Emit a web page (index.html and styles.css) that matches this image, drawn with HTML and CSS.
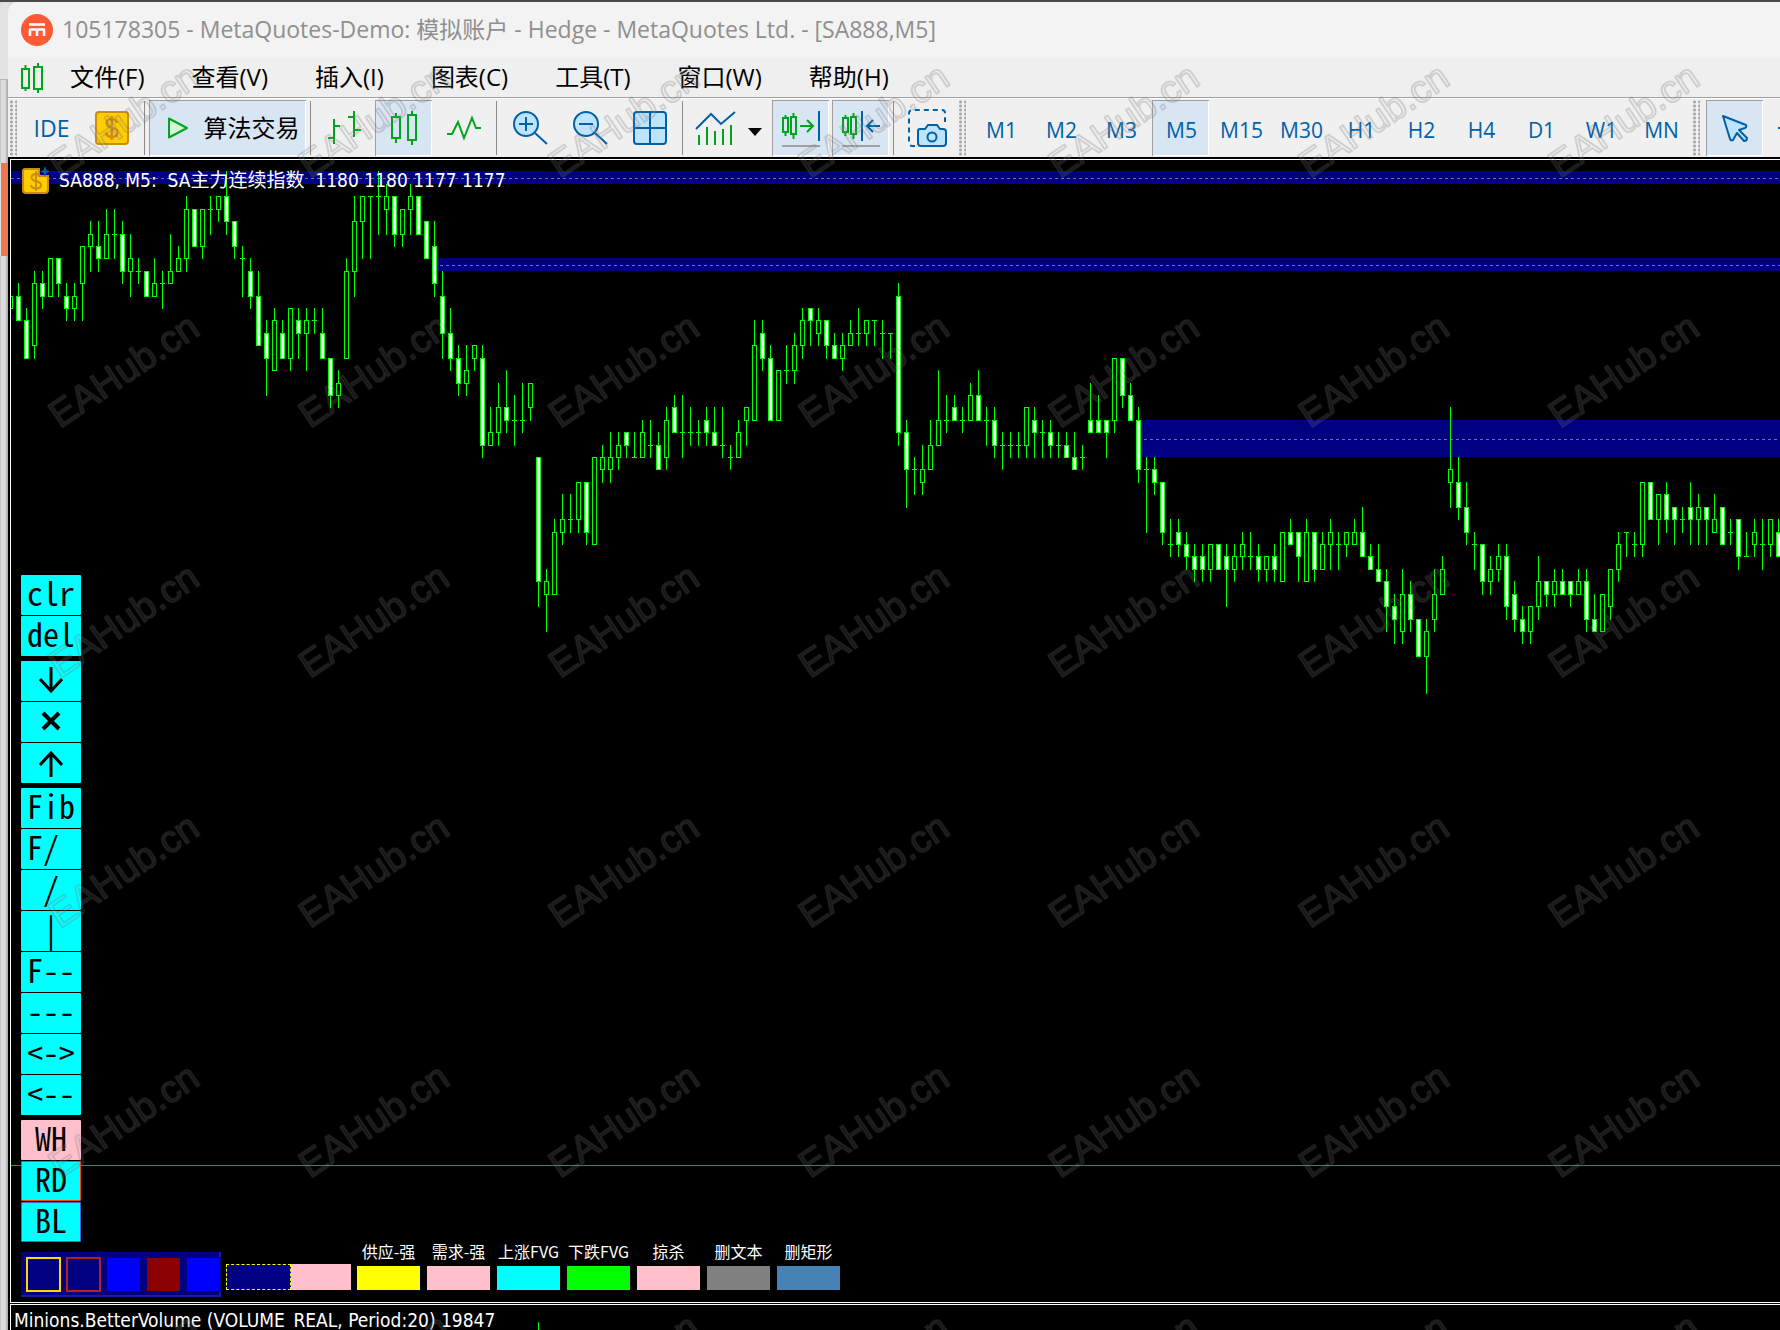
FILE: index.html
```html
<!DOCTYPE html>
<html lang="zh-CN">
<head>
<meta charset="utf-8">
<title>MetaTrader 5 - SA888,M5</title>
<link rel="stylesheet" href="styles.css">
</head>
<body>
<div class="desktop">
  <div class="backdrop" aria-hidden="true"></div>
  <div class="window">
    <header class="titlebar">
      <svg class="logo" viewBox="0 0 32 32" width="32" height="32" aria-hidden="true">
        <circle cx="16" cy="16" r="16" fill="#ff5a34"/>
        <path d="M8 10.500h16M9 22v-6.500h14V22M16 15.500V22" fill="none" stroke="#fff" stroke-width="2.600" stroke-linejoin="round"/>
      </svg>
      <h1 class="caption">105178305 - MetaQuotes-Demo: 模拟账户 - Hedge - MetaQuotes Ltd. - [SA888,M5]</h1>
    </header>

    <nav class="menubar">
      <svg viewBox="0 0 24 32" width="24" height="32" aria-hidden="true" fill="none" stroke="#00a41e" stroke-width="2">
        <path d="M1 7h7v19H1zM4.500 3v4M4.500 26v3M13 5h8v22h-8zM17 1v4M17 27v4"/>
      </svg>
      <button class="menu" type="button">文件(F)</button>
      <button class="menu" type="button">查看(V)</button>
      <button class="menu" type="button">插入(I)</button>
      <button class="menu" type="button">图表(C)</button>
      <button class="menu" type="button">工具(T)</button>
      <button class="menu" type="button">窗口(W)</button>
      <button class="menu" type="button">帮助(H)</button>
    </nav>

    <div class="toolbar" role="toolbar" aria-label="工具栏">
      <span class="grip"></span>
      <button class="tool ide" type="button">IDE</button>
      <button class="tool" type="button" aria-label="市场">
        <svg viewBox="0 0 41 40" width="41" height="40">
          <rect x="5" y="4" width="32" height="32" rx="3" fill="#ffcc00" stroke="#c98d10" stroke-width="2"/>
          <path d="M26 15c-1-3-3-4-5.500-4-3 0-5 1.500-5 4.200 0 6 11 3 11 9.300 0 3-2.500 4.500-5.500 4.500s-5.500-1.500-6-4.500M20.800 8v24" fill="none" stroke="#c98d10" stroke-width="2.400"/>
        </svg>
      </button>
      <span class="sep"></span>
      <button class="tool algo active" type="button">
        <svg viewBox="0 0 22 24" width="22" height="24"><path d="M2 2.500v19L20 12z" fill="#d5f7d5" stroke="#00a41e" stroke-width="2" stroke-linejoin="round"/></svg>
        <span>算法交易</span>
      </button>
      <span class="sep"></span>
      <button class="tool" type="button" aria-label="柱形图">
        <svg class="green" viewBox="0 0 41 40" width="41" height="40"><path d="M11 11v25M11 18h6M5 30h6M31 3v26M25 9h6M31 22h7"/></svg>
      </button>
      <button class="tool active" type="button" aria-label="烛形图">
        <svg class="green" viewBox="0 0 41 40" width="41" height="40"><path d="M9 9h8v21H9zM13 5v4M13 30v5M25 7h8v25h-8zM29 3v4M29 32v5"/></svg>
      </button>
      <button class="tool" type="button" aria-label="折线图">
        <svg class="green" viewBox="0 0 41 40" width="41" height="40"><path d="M4 26h5l6-12 6 16 8-20 4 10h5"/></svg>
      </button>
      <span class="sep"></span>
      <button class="tool" type="button" aria-label="放大">
        <svg class="blue" viewBox="0 0 41 40" width="41" height="40"><circle cx="17" cy="16" r="12"/><path d="M26 25l12 11M10 16h14M17 9v14"/></svg>
      </button>
      <button class="tool" type="button" aria-label="缩小">
        <svg class="blue" viewBox="0 0 41 40" width="41" height="40"><circle cx="17" cy="16" r="12"/><path d="M26 25l12 11M10 16h14"/></svg>
      </button>
      <button class="tool" type="button" aria-label="平铺窗口">
        <svg class="blue" viewBox="0 0 41 40" width="41" height="40"><rect x="5" y="4" width="32" height="32" rx="3"/><path d="M21 4v32M5 20h32"/></svg>
      </button>
      <span class="sep"></span>
      <button class="tool wide" type="button" aria-label="指标">
        <svg viewBox="0 0 41 40" width="41" height="40" fill="none" stroke-width="2"><path d="M1 21L16 6l10 10L40 4" stroke="#0060a8"/><path d="M4 27v10M12 19v18M20 23v14M28 21v16M36 17v20" stroke="#00a41e"/></svg>
        <svg viewBox="0 0 14 8" width="14" height="8"><path d="M0 0h14L7 8z" fill="#000"/></svg>
      </button>
      <button class="tool active" type="button" aria-label="图表移位">
        <svg viewBox="0 0 41 40" width="41" height="40" fill="none" stroke-width="2"><path d="M3 10h5v14H3zM5.500 7v3M5.500 24v4M11 9h5v17h-5zM13.500 5v4M13.500 26v5M20 18h13M27 12l6 6-6 6" stroke="#00a41e"/><path d="M39 3v30" stroke="#0060a8"/><path d="M2 38h38" stroke="#a0a0a0"/></svg>
      </button>
      <button class="tool active" type="button" aria-label="自动滚动">
        <svg viewBox="0 0 41 40" width="41" height="40" fill="none" stroke-width="2"><path d="M3 10h5v14H3zM5.500 7v3M5.500 24v4M11 9h5v17h-5zM13.500 5v4M13.500 26v5" stroke="#00a41e"/><path d="M22 3v30M40 18H27M33 12l-6 6 6 6" stroke="#0060a8"/><path d="M2 38h38" stroke="#a0a0a0"/></svg>
      </button>
      <span class="sep"></span>
      <button class="tool" type="button" aria-label="截图">
        <svg class="blue" viewBox="0 0 41 40" width="41" height="40"><path d="M9 38H6a3 3 0 0 1-3-3V5a3 3 0 0 1 3-3h30a3 3 0 0 1 3 3v9" fill="none" stroke-dasharray="5 4"/><path d="M14 21h5l3-4h9l3 4h3a3 3 0 0 1 3 3v11a3 3 0 0 1-3 3H15a3 3 0 0 1-3-3V23a2 2 0 0 1 2-2z"/><circle cx="26" cy="29" r="4.500"/></svg>
      </button>
      <span class="grip"></span>
      <button class="tool frame" type="button">M1</button>
      <button class="tool frame" type="button">M2</button>
      <button class="tool frame" type="button">M3</button>
      <button class="tool frame active" type="button">M5</button>
      <button class="tool frame" type="button">M15</button>
      <button class="tool frame" type="button">M30</button>
      <button class="tool frame" type="button">H1</button>
      <button class="tool frame" type="button">H2</button>
      <button class="tool frame" type="button">H4</button>
      <button class="tool frame" type="button">D1</button>
      <button class="tool frame" type="button">W1</button>
      <button class="tool frame" type="button">MN</button>
      <span class="grip"></span>
      <button class="tool active" type="button" aria-label="光标">
        <svg class="blue" viewBox="0 0 41 40" width="41" height="40"><path d="M9 8l23 9q1 2-1 3l-6 2 8 8q0 3-3 3l-7-8-4 7q-2 1-3-1z" stroke-linejoin="round"/></svg>
      </button>
      <button class="tool" type="button" aria-label="十字准线">
        <svg class="blue" viewBox="0 0 41 40" width="41" height="40"><path d="M4 20h33M20 4v32"/></svg>
      </button>
    </div>

    <main class="charts">
      <section class="pane price" aria-label="SA888 M5">
        <svg class="plot" id="plot" aria-hidden="true">
          <g class="zone">
            <rect x="0" y="11" width="100%" height="13"/>
            <rect x="426" y="98" width="100%" height="13"/>
            <rect x="1130" y="260" width="100%" height="37"/>
          </g>
          <g class="zone-mid">
            <line x1="0" y1="18.500" x2="100%" y2="18.500"/>
            <line x1="429" y1="105.500" x2="100%" y2="105.500"/>
            <line x1="1133" y1="279.500" x2="100%" y2="279.500"/>
          </g>
          <line class="level" x1="0" y1="1005.500" x2="100%" y2="1005.500"/>
          <path class="wicks" id="wicks"/>
          <path class="down" id="down"/>
        </svg>

        <div class="chart-head">
          <svg viewBox="0 0 28 28" width="28" height="28" aria-hidden="true">
            <path d="M3 3h14v7h9v14q0 3-3 3H4q-3 0-3-3V5q0-2 2-2z" fill="#ffcc00" stroke="#c98d10" stroke-width="2"/>
            <path d="M19 11c-1-2-3-3-5-3-2.500 0-4.500 1-4.500 3.500 0 5 9.500 2.500 9.500 7.500 0 2.500-2 3.500-4.800 3.500-2.700 0-4.700-1-5.200-3.500M14 5v20" fill="none" stroke="#c98d10" stroke-width="2"/>
            <path d="M23 0l1.500 4 3.500 1.500-3.500 1.500-1.500 4-1.500-4L18 5.500 21.500 4z" fill="#0060a8"/>
          </svg>
          <span class="symbol">SA888, M5:&nbsp; SA主力连续指数&nbsp; 1180 1180 1177 1177</span>
        </div>

        <div class="keys">
          <div class="key-group">
            <button class="key" type="button">clr</button>
            <button class="key" type="button">del</button>
          </div>
          <div class="key-group">
            <button class="key icon" type="button" aria-label="向下箭头"><svg viewBox="0 0 24 28" width="24" height="28"><path d="M12 0v24M1 12l11 12 11-12"/></svg></button>
            <button class="key icon" type="button" aria-label="叉"><svg class="bold" viewBox="0 0 24 28" width="24" height="28"><path d="M4 5l16 16M20 5L4 21"/></svg></button>
            <button class="key icon" type="button" aria-label="向上箭头"><svg viewBox="0 0 24 28" width="24" height="28"><path d="M12 28V4M1 16L12 4l11 12"/></svg></button>
          </div>
          <div class="key-group">
            <button class="key" type="button">Fib</button>
            <button class="key" type="button">F/ </button>
            <button class="key" type="button"> / </button>
            <button class="key" type="button"> | </button>
            <button class="key" type="button">F--</button>
            <button class="key" type="button">---</button>
            <button class="key" type="button">&lt;-&gt;</button>
            <button class="key" type="button">&lt;--</button>
          </div>
          <div class="key-group">
            <button class="key white" type="button">WH</button>
            <button class="key red" type="button">RD</button>
            <button class="key royal" type="button">BL</button>
          </div>
        </div>

        <div class="palette">
          <div class="swatches">
            <button class="swatch gold" type="button" aria-label="金色框"></button>
            <button class="swatch brick" type="button" aria-label="砖红框"></button>
            <button class="swatch solid-blue" type="button" aria-label="蓝色"></button>
            <button class="swatch solid-red" type="button" aria-label="深红"></button>
            <button class="swatch solid-blue" type="button" aria-label="蓝色"></button>
          </div>
          <div class="samples">
            <button class="sample dashed" type="button" aria-label="虚线框"></button>
            <button class="sample plain" type="button" aria-label="粉色"></button>
          </div>
          <div class="marks">
            <button class="mark" type="button"><span>供应-强</span><i class="chip yellow"></i></button>
            <button class="mark" type="button"><span>需求-强</span><i class="chip pink"></i></button>
            <button class="mark" type="button"><span>上涨FVG</span><i class="chip aqua"></i></button>
            <button class="mark" type="button"><span>下跌FVG</span><i class="chip lime"></i></button>
            <button class="mark" type="button"><span>掠杀</span><i class="chip pink"></i></button>
            <button class="mark" type="button"><span>删文本</span><i class="chip gray"></i></button>
            <button class="mark" type="button"><span>删矩形</span><i class="chip steel"></i></button>
          </div>
        </div>
      </section>

      <section class="pane volume" aria-label="BetterVolume">
        <svg class="plot" aria-hidden="true"><rect x="527" y="17" width="1" height="20" fill="#00ff00"/></svg>
        <span class="indicator">Minions.BetterVolume (VOLUME_REAL, Period:20) 19847</span>
      </section>
    </main>
  </div>
</div>

<svg class="watermark" aria-hidden="true">
  <defs>
    <pattern id="mark" width="250" height="250" patternUnits="userSpaceOnUse">
      <text class="mark-text" transform="translate(60 179) rotate(-34)">EAHub.cn</text>
    </pattern>
  </defs>
  <rect width="100%" height="100%" fill="url(#mark)"/>
</svg>
<script src="chart.js"></script>
</body>
</html>
```
FILE: styles.css
```css
* { box-sizing: border-box; }

body {
  margin: 0;
  font-family: "Open Sans", "Noto Sans CJK SC", sans-serif;
  background: #4a4a4a;
  overflow: hidden;
}

button {
  margin: 0;
  padding: 0;
  border: 0;
  background: none;
  font: inherit;
  color: inherit;
}

svg { display: block; flex: none; }

.desktop {
  display: flex;
  min-height: 100vh;
  padding-top: 2px;
  background: linear-gradient(#4a4a4a 2px, #dcdcdc 2px);
}

.backdrop {
  flex: none;
  width: 8px;
  border-radius: 6px 0 0 0;
  background:
    linear-gradient(90deg, #e0e0e0 1px, #ea7850 1px) 0 161px / 8px 93px no-repeat,
    linear-gradient(#e3e3e3 77px, #b8b8b8 77px 78px, transparent 78px) 0 0 / 8px 161px no-repeat,
    linear-gradient(90deg, #c4c4c4 1px, #dcdcdc 1px 5px, #b4b4b4 7px, #a4a4a4);
}

.window {
  flex: 1;
  min-width: 0;
  display: flex;
  flex-direction: column;
  border-radius: 10px 0 0 0;
  background: #f0f0f0;
  overflow: hidden;
}

.titlebar {
  display: flex;
  align-items: center;
  gap: 9px;
  height: 56px;
  padding: 0 13px;
  background: #f3f3f3;
}

.caption {
  margin: 0 0 2px;
  font-size: 23px;
  line-height: 32px;
  font-weight: 400;
  color: #8f8f8f;
  white-space: nowrap;
}

.menubar {
  display: flex;
  align-items: center;
  gap: 47px;
  height: 40px;
  padding: 0 13px;
  border-bottom: 1px solid #a0a0a0;
  background: #efefef;
}

.menubar svg { margin-right: -22px; }

.menu {
  padding-bottom: 2px;
  font-size: 24px;
  line-height: 32px;
  color: #000;
  white-space: nowrap;
}

.toolbar {
  display: flex;
  align-items: center;
  gap: 3px;
  height: 59px;
  padding: 0 0 0 1px;
  border-top: 1px solid #fff;
  background: #f0f0f0;
  overflow: hidden;
}

.grip {
  flex: none;
  width: 11px;
  height: 56px;
  background:
    radial-gradient(circle, #a8a8a8 1px, transparent 2px) 0 0 / 5px 4px;
  background-clip: content-box;
  padding: 0 3px 0 1px;
}

.sep {
  flex: none;
  width: 3px;
  height: 54px;
  border-left: 1px solid #f0f0f0;
  border-right: 1px solid #f0f0f0;
  background: #8a8a8a;
}

.tool {
  flex: none;
  display: flex;
  align-items: center;
  justify-content: center;
  width: 57px;
  height: 56px;
  font-size: 21px;
  line-height: 28px;
  color: #0060a8;
}

.tool.active {
  background: #d8e5f2;
  box-shadow: inset 1px 1px #a0a0a0, inset -1px -1px #fff;
}

.tool.frame { padding: 4px 0 0 2px; }
.tool.ide { font-size: 23px; }
.tool.wide { width: 82px; gap: 12px; }
.tool.wide svg + svg { margin-top: 8px; }

.tool.algo {
  width: 157px;
  padding: 0 0 0 11px;
  gap: 15px;
  font-size: 24px;
  color: #000;
}

.green { fill: none; stroke: #00a41e; stroke-width: 2; }
.blue { fill: #bde3ff; stroke: #0060a8; stroke-width: 2; }

.charts {
  flex: 1;
  display: flex;
  flex-direction: column;
  gap: 1px;
  padding: 2px 0 0 2px;
  background: #000;
}

.pane {
  position: relative;
  border-left: 1px solid #fff;
  border-top: 1px solid #fff;
  background: #000;
  color: #fff;
  font-family: "DejaVu Sans Condensed", "Noto Sans", "Noto Sans CJK SC", sans-serif;
}

.price {
  flex: 1;
  display: flex;
  flex-direction: column;
  border-bottom: 1px solid #fff;
}

.volume { height: 26px; overflow: hidden; }

.plot {
  position: absolute;
  left: 0;
  top: 0;
  width: 100%;
  height: 100%;
  shape-rendering: crispEdges;
}

.zone { fill: #000080; }
.zone-mid { stroke: #77776a; stroke-width: 1; stroke-dasharray: 3 3; }
.level { stroke: #00b400; stroke-width: 1; }
.wicks { fill: #00ff00; }
.down { fill: #fff; }

.chart-head,
.keys,
.palette,
.indicator { position: relative; }

.chart-head {
  display: flex;
  align-items: center;
  gap: 9px;
  padding: 6px 11px;
}

.symbol,
.indicator {
  font-size: 19px;
  line-height: 24px;
  white-space: nowrap;
}

.indicator {
  display: block;
  padding: 3px 0 0 3px;
}

.keys {
  display: flex;
  flex-direction: column;
  gap: 5px;
  width: 60px;
  margin: auto 0 10px 10px;
}

.key-group {
  display: flex;
  flex-direction: column;
  gap: 1px;
}

.key {
  display: flex;
  align-items: center;
  justify-content: center;
  height: 40px;
  padding-bottom: 6px;
  border-radius: 1px;
  background: #00ffff;
  color: #000;
  font-family: "Noto Sans Mono CJK SC", "Liberation Mono", monospace;
  font-size: 32px;
  line-height: 34px;
  white-space: pre;
}

.key.icon { padding: 0; }
.key svg { fill: none; stroke: #000; stroke-width: 3; }
.key svg.bold { stroke-width: 4; }
.key.white { background: #ffc0cb; }
.key.red { border: 1px solid #ff4500; }
.key.royal { border: 1px solid #4169e1; }

.palette {
  display: flex;
  align-items: flex-end;
  height: 45px;
  margin: 0 0 5px 10px;
}

.swatches {
  display: flex;
  align-items: center;
  gap: 5px;
  width: 200px;
  height: 45px;
  padding: 5px 0 5px 5px;
  background: #000080;
  box-shadow: inset -2px -2px #1c1c9c;
}

.swatch { flex: none; width: 35px; height: 35px; }
.swatch.gold { border: 2px solid #ffd700; }
.swatch.brick { border: 2px solid #b22222; }
.swatch.solid-blue { background: #0000ff; border: 1px solid #000080; }
.swatch.solid-red { background: #8b0000; border: 1px solid #000080; }

.samples { display: flex; padding: 0 6px 7px 5px; }
.sample { width: 60px; height: 26px; }
.sample.dashed { width: 65px; background: #000080; border: 1px dashed #ffff00; }
.sample.plain { background: #ffc0cb; }

.marks { display: flex; gap: 7px; padding-bottom: 7px; }

.mark {
  display: flex;
  flex-direction: column;
  align-items: center;
  gap: 3px;
  width: 63px;
  font-family: "Noto Sans CJK SC", sans-serif;
  font-size: 16px;
  line-height: 24px;
  white-space: nowrap;
}

.chip { width: 63px; height: 24px; }
.chip.yellow { background: #ffff00; }
.chip.pink { background: #ffc0cb; }
.chip.aqua { background: #00ffff; }
.chip.lime { background: #00ff00; }
.chip.gray { background: #808080; }
.chip.steel { background: #4682b4; }

.watermark {
  position: fixed;
  left: 0;
  top: 0;
  width: 100%;
  height: 100%;
  pointer-events: none;
}

.mark-text {
  font-family: "Liberation Sans", Arial, sans-serif;
  font-size: 38px;
  fill: rgba(255, 255, 255, 0.08);
  stroke: rgba(90, 90, 90, 0.22);
  stroke-width: 2px;
  stroke-linejoin: round;
}
```
FILE: chart.js
```js
// One entry per bar: high, body top, body bottom, low, counted in price steps
// below the top of the scale. A trailing "w" marks a bar that closed lower.
const bars = `
10,10,11,11 9,10,12,12w 11,12,15,15w 8,9,14,15 8,9,10,11w 7,7,10,10 7,7,9,10w 9,10,11,12w 9,10,11,12 6,6,9,12
4,5,6,8 4,6,7,8w 3,5,7,7 3,5,5,7 4,5,8,9w 5,7,8,10 7,8,8,9 8,8,10,10w 7,9,10,10 8,9,9,11
5,8,9,9 6,7,8,8 2,3,7,8 3,3,6,6w 3,3,6,7 2,3,3,5 2,2,3,4 0,2,4,5w 4,4,6,7w 6,7,7,10
7,8,10,11w 8,10,14,14w 12,13,15,18w 11,12,16,16 12,13,15,15w 11,11,15,16 11,12,13,15w 11,12,13,16 11,12,12,13 11,13,15,15w
15,15,18,19w 16,17,18,19 7,8,15,15 2,4,8,10 2,2,4,7 2,2,2,7 0,2,2,5 1,2,3,5 2,2,5,6w 3,3,5,6
1,2,3,5 2,2,5,5w 4,4,7,7w 4,6,9,10w 8,10,13,15w 11,13,15,16w 14,15,17,18w 14,16,17,18 14,14,15,16 14,15,22,23w
19,21,22,22 17,19,21,22 16,19,20,21w 18,20,20,22 17,20,20,21 17,17,19,20 23,23,33,35w 32,33,34,37 28,29,34,34 26,28,29,30
26,28,28,29 25,25,28,29 25,25,29,30w 23,23,30,30 22,23,24,25 21,23,24,25 21,22,23,24 21,21,22,23w 21,23,23,23 20,21,23,23
20,22,22,23 21,22,24,24w 19,20,23,24 18,19,21,21w 18,21,21,23 19,21,21,22 20,21,21,22 19,20,21,22w 19,21,22,22w 19,22,22,23
22,23,23,24 20,21,23,23 19,19,20,22 12,14,20,20 12,13,15,16w 14,15,20,20w 16,16,20,20 14,16,16,17 13,14,16,17 11,12,14,15
11,11,12,14w 11,12,13,14 12,12,14,15w 13,14,15,15w 13,14,15,16 12,13,14,14 11,13,13,14 12,12,13,14 12,12,12,14 12,13,13,15
13,13,13,15 9,10,21,22w 20,21,24,27w 23,24,24,26 22,24,25,26 20,22,24,24 16,20,22,22 18,20,20,21 18,19,20,20w 19,20,20,21
17,18,20,20 16,18,20,20w 19,20,20,22 19,20,22,23w 21,22,22,24 21,22,22,23 21,22,22,23 19,19,22,23 19,20,21,23w 20,21,21,23
20,21,22,23w 21,22,22,23 21,22,23,23w 21,23,24,24w 22,23,23,24 17,20,21,21w 18,20,21,21w 20,20,21,23w 15,15,20,21 15,15,18,19w
17,18,20,20w 19,20,24,25w 23,24,24,29 23,24,25,26w 25,25,29,30w 28,30,30,31 28,29,30,31w 29,30,31,32w 30,31,32,33w 30,31,32,33w
30,30,32,33 30,30,32,32w 30,31,32,35w 30,31,32,33 29,30,31,32 29,31,31,32 30,31,32,33w 31,31,32,33 30,31,32,33w 29,29,33,33
28,29,30,30w 29,29,31,33w 28,29,33,33 29,29,32,33w 29,30,32,32 28,29,30,32 29,30,30,32 29,29,30,31 28,29,30,30 27,29,31,31w
30,31,32,32w 30,32,33,33w 32,33,35,37w 34,35,36,38w 32,34,37,38 33,34,36,37w 36,36,39,39w 36,37,39,42 32,34,36,37 31,32,34,34
19,24,25,27 23,25,27,28w 25,27,29,30w 29,30,30,32 30,30,33,34w 31,32,33,34 30,31,32,33 30,31,35,36w 33,34,36,37w 35,36,37,38w
35,35,37,38 31,33,35,36 33,33,34,35w 32,33,34,35 32,33,34,34w 33,33,34,35w 32,33,34,34 32,33,36,37w 34,36,37,37w 34,34,37,37
32,32,35,36 29,30,32,33 29,29,29,31 29,30,30,31 25,25,30,31 25,25,28,28w 26,26,28,30 25,26,28,29w 27,27,28,30w 27,28,28,29
25,27,28,30w 26,27,28,30 27,27,28,30w 26,28,29,29 27,27,30,30w 28,29,29,30 28,28,31,32w 29,31,31,31 28,29,30,31 28,30,30,32
28,28,30,31 28,29,31,31w`.trim().split(/\s+/);

const BAR_STEP = 8;
const FIRST_X = -1;
const row = step => Math.round(11.4 + 12.42 * step);
const box = (x, y, w, h) => `M${x} ${y}h${w}v${h}h${-w}z`;

let green = "";
let white = "";

bars.forEach((bar, i) => {
  const [high, top, bottom, low] = bar.replace("w", "").split(",").map(n => row(+n));
  const x = FIRST_X + i * BAR_STEP;
  if (top > high) green += box(x, high, 1, top - high);
  if (low > bottom) green += box(x, bottom + 1, 1, low - bottom);
  green += box(x - 2, top, 5, 1);
  if (bottom > top) {
    green += box(x - 2, bottom, 5, 1);
    green += box(x - 2, top + 1, 1, bottom - top - 1);
    green += box(x + 2, top + 1, 1, bottom - top - 1);
    if (bar.endsWith("w")) white += box(x - 1, top + 1, 3, bottom - top - 1);
  }
});

document.getElementById("wicks").setAttribute("d", green);
document.getElementById("down").setAttribute("d", white);
```
